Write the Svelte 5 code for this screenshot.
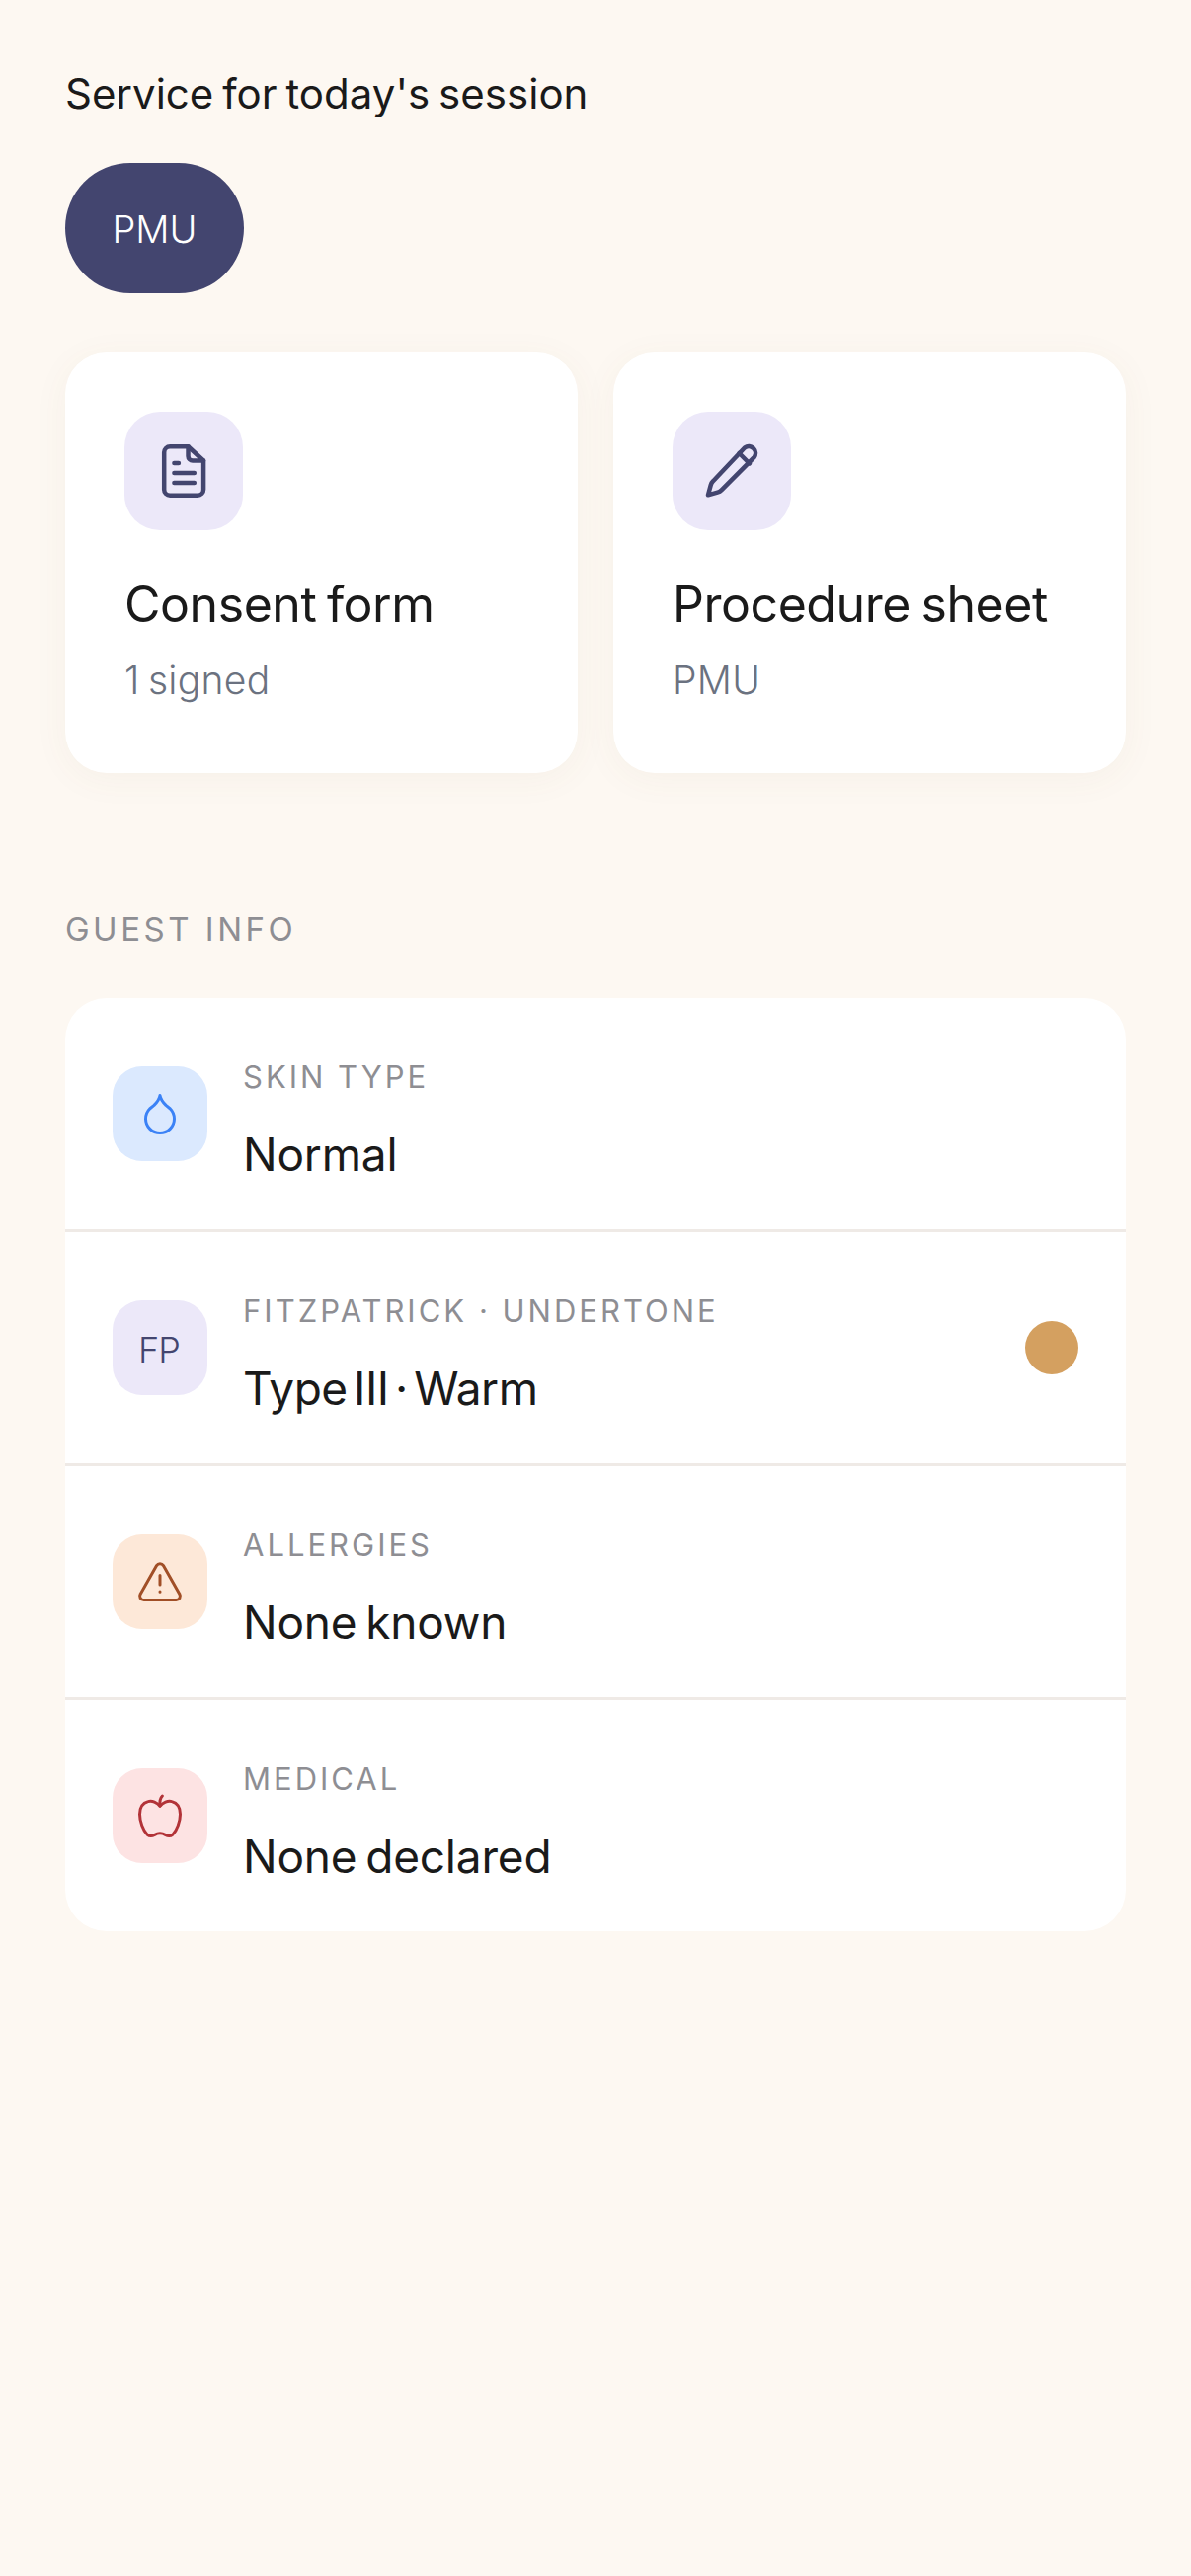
<script>
  const rows = [
    { label: 'SKIN TYPE', value: 'Normal', tone: 'blue', icon: 'drop' },
    { label: 'FITZPATRICK · UNDERTONE', value: 'Type III · Warm', tone: 'violet', icon: 'fp', swatch: true },
    { label: 'ALLERGIES', value: 'None known', tone: 'orange', icon: 'warn' },
    { label: 'MEDICAL', value: 'None declared', tone: 'red', icon: 'apple' }
  ];
</script>

<main class="page">
  <p class="title">Service for today's session</p>
  <div class="chip">PMU</div>

  <div class="cards">
    <section class="card">
      <div class="card-icon">
        <svg viewBox="0 0 24 24" width="72" height="72" fill="none" stroke="#43456f" stroke-width="1.5" stroke-linecap="round" stroke-linejoin="round">
          <path d="M13.500 3.750H7.400a2 2 0 0 0-2 2v12.500a2 2 0 0 0 2 2h9.300a2 2 0 0 0 2-2V8.500z" />
          <path d="M13.500 3.750V7A1.500 1.500 0 0 0 15 8.500h3.700" />
          <path d="M8.800 9.300h1.500M8.800 12.700h6.800M8.800 16h6.800" />
        </svg>
      </div>
      <h2>Consent form</h2>
      <p class="sub">1 signed</p>
    </section>
    <section class="card">
      <div class="card-icon">
        <svg viewBox="0 0 24 24" width="72" height="72" fill="none" stroke="#43456f" stroke-width="1.500" stroke-linecap="round" stroke-linejoin="round">
          <path d="M16.400 4.100A2.300 2.300 0 0 1 19.600 7.300L8.600 18.400Q8 19 7.200 19.200L4 20.100 4.900 16.800Q5.100 16 5.700 15.400Z" />
          <path d="M14.500 6 18 9.500" />
        </svg>
      </div>
      <h2>Procedure sheet</h2>
      <p class="sub">PMU</p>
    </section>
  </div>

  <h3 class="section">GUEST INFO</h3>

  <section class="list">
    {#each rows as row}
      <div class="row">
        <div class="row-icon {row.tone}">
          {#if row.icon === 'drop'}
            <svg viewBox="0 0 24 24" width="48" height="48" fill="none" stroke="#3b82f6" stroke-width="1.500" stroke-linecap="round" stroke-linejoin="round">
              <path d="M12 2.750C12.300 4.800 13.600 6.300 15 7.700L17.200 9.500A7.250 7.250 0 1 1 6.800 9.500L9 7.700C10.400 6.300 11.700 4.800 12 2.750Z" />
            </svg>
          {:else if row.icon === 'fp'}
            <span class="fp">FP</span>
          {:else if row.icon === 'warn'}
            <svg viewBox="0 0 24 24" width="48" height="48" fill="none" stroke="#a14f27" stroke-width="1.500" stroke-linecap="round" stroke-linejoin="round">
              <path d="M10.300 3.800 2.100 18.200A2 2 0 0 0 3.800 21.250H20.200A2 2 0 0 0 21.900 18.200L13.700 3.800A2 2 0 0 0 10.300 3.800Z" />
              <path d="M12 8.750V13.500M12 17V17.100" />
            </svg>
          {:else}
            <svg viewBox="0 0 24 24" width="48" height="48" fill="none" stroke="#b23338" stroke-width="1.500" stroke-linecap="round" stroke-linejoin="round">
              <path d="M12 7.200C10.500 5.300 8 4.200 6 4.800 3.300 5.500 1.750 8 1.750 11.300 1.750 15 3.500 19.500 5.500 21.500 6.800 22.600 8 22.400 9.300 21.700 10.300 21.100 11 20.900 12 20.900S13.700 21.100 14.700 21.700C16 22.400 17.200 22.600 18.500 21.500 20.500 19.500 22.250 15 22.250 11.300 22.250 8 20.700 5.500 18 4.800 16 4.200 13.500 5.300 12 7.200Z" />
              <path d="M12 7C11.800 5 12 3.200 13.200 2" />
            </svg>
          {/if}
        </div>
        <div class="text">
          <div class="label">{row.label}</div>
          <div class="value" class:tight={row.swatch}>{row.value}</div>
        </div>
        {#if row.swatch}<span class="swatch"></span>{/if}
      </div>
    {/each}
  </section>
</main>

<style>
  :global(body) {
    margin: 0;
    background: #fdf8f2;
  }
  .page {
    height: 2609px;
    box-sizing: border-box;
    padding: 68px 66px 0;
    background: #fdf8f2;
    font-family: Inter, "Noto Sans", sans-serif;
    font-weight: 400;
    color: #1a1a1a;
    overflow: hidden;
  }
  .title {
    margin: 0;
    font-size: 42px;
    line-height: 54px;
    letter-spacing: 0.03px;
    word-spacing: -3px;
  }
  .chip {
    width: 181px;
    height: 132px;
    margin-top: 43px;
    padding-top: 2px;
    box-sizing: border-box;
    border-radius: 66px;
    background: #43456f;
    color: #fff;
    font-size: 38px;
    display: flex;
    align-items: center;
    justify-content: center;
    font-weight: 300;
  }
  .cards {
    display: grid;
    grid-template-columns: 1fr 1fr;
    gap: 36px;
    margin-top: 60px;
  }
  .card {
    height: 426px;
    box-sizing: border-box;
    padding: 60px;
    background: #fff;
    border-radius: 42px;
    box-shadow: 0 6px 36px rgba(120, 90, 60, 0.05);
  }
  .card-icon {
    width: 120px;
    height: 120px;
    border-radius: 36px;
    background: #ece8f9;
    display: flex;
    align-items: center;
    justify-content: center;
  }
  h2 {
    margin: 45px 0 0;
    font-size: 50px;
    line-height: 60px;
    font-weight: 400;
    letter-spacing: -0.45px;
    word-spacing: -3px;
  }
  .sub {
    margin: 23px 0 0;
    font-size: 39px;
    line-height: 48px;
    color: #6b7280;
    font-weight: 300;
    letter-spacing: 0.3px;
    word-spacing: -3px;
  }
  .section {
    margin: 137px 0 0;
    font-size: 33px;
    line-height: 42px;
    font-weight: 400;
    letter-spacing: 3.5px;
    color: #8e8e93;
  }
  .list {
    margin-top: 49px;
    background: #fff;
    border-radius: 42px;
    overflow: hidden;
  }
  .row {
    height: 234px;
    padding: 0 48px;
    display: flex;
    align-items: center;
    gap: 36px;
    border-bottom: 3px solid #efeae6;
  }
  .row:last-child {
    border-bottom: 0;
  }
  .row-icon {
    width: 96px;
    height: 96px;
    flex: none;
    border-radius: 30px;
    display: flex;
    align-items: center;
    justify-content: center;
  }
  .blue { background: #dbe9fe; }
  .violet { background: #ece8f9; }
  .orange { background: #fde8d8; }
  .red { background: #fde3e3; }
  .fp {
    font-size: 36px;
    padding: 3px 2px 0 0;
    letter-spacing: -1px;
    color: #43456f;
    font-weight: 300;
  }
  .text {
    flex: 1;
    min-width: 0;
    padding-top: 14px;
  }
  .label {
    font-size: 31px;
    line-height: 40px;
    letter-spacing: 3px;
    color: #8e8e93;
  }
  .value {
    margin-top: 28px;
    font-size: 46px;
    line-height: 60px;
    letter-spacing: -0.2px;
    word-spacing: -4px;
  }
  .value.tight {
    letter-spacing: -0.5px;
    word-spacing: -6px;
  }
  .swatch {
    width: 54px;
    height: 54px;
    border-radius: 50%;
    background: #d4a060;
    flex: none;
  }
</style>
